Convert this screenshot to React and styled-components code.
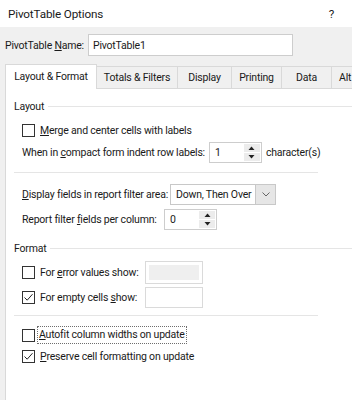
import React from 'react';
import styled, {createGlobalStyle} from 'styled-components';

const GlobalStyle = createGlobalStyle`
    html, body {
        margin: 0;
        padding: 0;
        background: #f0f0f0;
        font-family: Roboto, "Noto Sans", sans-serif;
        font-size: 10.5px;
        letter-spacing: -0.2px;
        color: #1a1a1a;
    }
`;

const Dialog = styled.div`
    width: 352px;
    height: 400px;
    overflow: hidden;
    display: flex;
    flex-direction: column;
    background: #f0f0f0;
`;

const TitleBar = styled.div`
    height: 27px;
    flex-shrink: 0;
    background: #fff;
    display: flex;
    align-items: center;
    justify-content: space-between;
    padding: 0 18px 0 8px;
    font-size: 11.7px;
    letter-spacing: -0.15px;
`;

const NameRow = styled.div`
    display: flex;
    align-items: center;
    padding: 7px 0 0 5px;
    gap: 4px;
`;

const TextInput = styled.div`
    width: ${p => p.w}px;
    height: ${p => p.h || 21}px;
    box-sizing: border-box;
    border: 1px solid ${p => p.border || '#cdcdcd'};
    background: #fff;
    display: flex;
    align-items: center;
    padding-left: 4px;
    ${p => p.inset && `
        padding: 3px;
        & > span { flex: 1; align-self: stretch; background: #efefef; }
    `}
`;

const TabStrip = styled.div`
    display: flex;
    margin: 8px 0 0 5px;
    align-items: flex-end;
    height: 24px;
`;

const Tab = styled.div`
    width: ${p => p.w}px;
    flex-shrink: 0;
    height: ${p => (p.active ? 25 : 22)}px;
    box-sizing: border-box;
    display: flex;
    align-items: center;
    justify-content: ${p => (p.left ? 'flex-start' : 'center')};
    padding-left: ${p => (p.left ? 7 : 0)}px;
    padding-bottom: ${p => (p.active ? 2 : 0)}px;
    white-space: nowrap;
    background: ${p => (p.active ? '#fff' : '#f0f0f0')};
    border: 1px solid #d9d9d9;
    border-bottom: none;
    border-left: ${p => (p.first ? '1px solid #d9d9d9' : 'none')};
    margin-bottom: ${p => (p.active ? -1 : 0)}px;
    position: relative;
    z-index: ${p => (p.active ? 1 : 0)};
`;

const Panel = styled.div`
    flex: 1;
    margin-left: 5px;
    background: #fff;
    border-left: 1px solid #d9d9d9;
    border-top: 1px solid #d9d9d9;
    padding: 9px 0 0 8px;
`;

const GroupHeader = styled.div`
    display: flex;
    align-items: center;
    gap: 4px;
    height: 16px;
    margin-top: ${p => p.mt || 0}px;
    &::after {
        content: '';
        flex: 1;
        height: 1px;
        background: #e5e5e5;
    }
`;

const Rule = styled.div`
    width: 304px;
    height: 1px;
    background: #e5e5e5;
    margin-top: ${p => p.mt}px;
`;

const Row = styled.div`
    display: flex;
    align-items: center;
    padding-left: 8px;
    height: ${p => p.h || 21}px;
    margin-top: ${p => p.mt || 0}px;
    gap: ${p => p.gap || 4}px;
`;

const Label = styled.span`
    flex-shrink: 0;
    width: ${p => (p.w ? `${p.w}px` : 'auto')};
    white-space: nowrap;
    ${p => p.focus && `
        outline: 1px dotted #6e6e6e;
        padding: 1px 1px 2px 1px;
        margin-left: -2px;
    `}
`;

const Box = styled.span`
    width: 13px;
    height: 13px;
    box-sizing: border-box;
    border: 1px solid #333;
    background: #fff;
    display: inline-flex;
    align-items: center;
    justify-content: center;
    flex-shrink: 0;
`;

const Spin = styled.div`
    display: flex;
    height: 21px;
    box-sizing: border-box;
    border: 1px solid #cdcdcd;
    background: #fff;
`;

const SpinText = styled.div`
    width: ${p => p.w}px;
    padding-left: 5px;
    display: flex;
    align-items: center;
`;

const SpinButtons = styled.div`
    width: 16px;
    display: flex;
    flex-direction: column;
    padding: 1px 1px 1px 0;
    gap: 1px;
`;

const SpinBtn = styled.div`
    flex: 1;
    background: #ececec;
    display: flex;
    align-items: center;
    justify-content: center;
`;

const Select = styled.div`
    display: flex;
    height: 21px;
    width: 106px;
    box-sizing: border-box;
    border: 1px solid #c8c8c8;
    background: #fff;
`;

const SelectText = styled.div`
    flex: 1;
    padding-left: 5px;
    display: flex;
    align-items: center;
    white-space: nowrap;
`;

const SelectArrow = styled.div`
    width: 19px;
    background: #e6e6e6;
    border-left: 1px solid #c8c8c8;
    display: flex;
    align-items: center;
    justify-content: center;
`;

const U = styled.span`
    text-decoration: underline;
`;

const Check = ({checked}) => (
    <Box>
        {checked && (
            <svg width="11" height="11" viewBox="0 0 11 11">
                <path d="M1.5 5.5 L4.2 8.2 L9.5 2.2" fill="none" stroke="#222" strokeWidth="1" />
            </svg>
        )}
    </Box>
);

const Tri = ({up}) => (
    <svg width="7" height="4" viewBox="0 0 7 4">
        <path d={up ? 'M0.5 4 L3.5 0.5 L6.5 4 Z' : 'M0.5 0 L3.5 3.5 L6.5 0 Z'} fill="#222" />
    </svg>
);

const Spinner = ({value, w}) => (
    <Spin>
        <SpinText w={w}>{value}</SpinText>
        <SpinButtons>
            <SpinBtn><Tri up /></SpinBtn>
            <SpinBtn><Tri /></SpinBtn>
        </SpinButtons>
    </Spin>
);

const tabs = [
    {label: 'Layout & Format', w: 92},
    {label: 'Totals & Filters', w: 81},
    {label: 'Display', w: 54},
    {label: 'Printing', w: 50},
    {label: 'Data', w: 50},
    {label: 'Alt', w: 40, left: true},
];

const App = () => {
    return (
        <Dialog>
            <GlobalStyle />
            <TitleBar>
                <span>PivotTable Options</span>
                <span>?</span>
            </TitleBar>

            <NameRow>
                <span>PivotTable <U>N</U>ame:</span>
                <TextInput w={205} h={22}>PivotTable1</TextInput>
            </NameRow>

            <TabStrip>
                {tabs.map((t, i) => (
                    <Tab key={t.label} active={i === 0} first={i === 0} w={t.w} left={t.left}>{t.label}</Tab>
                ))}
            </TabStrip>

            <Panel>
                <GroupHeader>Layout</GroupHeader>
                <Row mt={6} gap={5}>
                    <Check />
                    <Label><U>M</U>erge and center cells with labels</Label>
                </Row>
                <Row mt={1}>
                    <Label>When in <U>c</U>ompact form indent row labels:</Label>
                    <Spinner value="1" w={29} />
                    <Label>character(s)</Label>
                </Row>
                <Rule mt={9} />
                <Row mt={11}>
                    <Label w={144}><U>D</U>isplay fields in report filter area:</Label>
                    <Select>
                        <SelectText>Down, Then Over</SelectText>
                        <SelectArrow>
                            <svg width="8" height="5" viewBox="0 0 8 5">
                                <path d="M0.5 0.5 L4 4 L7.5 0.5" fill="none" stroke="#666" strokeWidth="1" />
                            </svg>
                        </SelectArrow>
                    </Select>
                </Row>
                <Row mt={4}>
                    <Label w={138}>Report filter <U>f</U>ields per column:</Label>
                    <Spinner value="0" w={29} />
                </Row>

                <GroupHeader mt={10}>Format</GroupHeader>
                <Row mt={5} h={23} gap={5}>
                    <Check />
                    <Label w={100}>For <U>e</U>rror values show:</Label>
                    <TextInput w={58} h={23} border="#dadada" inset><span /></TextInput>
                </Row>
                <Row mt={3} h={21} gap={5}>
                    <Check checked />
                    <Label w={100}>For empty cells <U>s</U>how:</Label>
                    <TextInput w={58} h={21} border="#dadada" />
                </Row>
                <Rule mt={7} />
                <Row mt={10} h={18} gap={5}>
                    <Check />
                    <Label focus><U>A</U>utofit column widths on update</Label>
                </Row>
                <Row mt={2} gap={5}>
                    <Check checked />
                    <Label><U>P</U>reserve cell formatting on update</Label>
                </Row>
            </Panel>
        </Dialog>
    );
};

export default App;
